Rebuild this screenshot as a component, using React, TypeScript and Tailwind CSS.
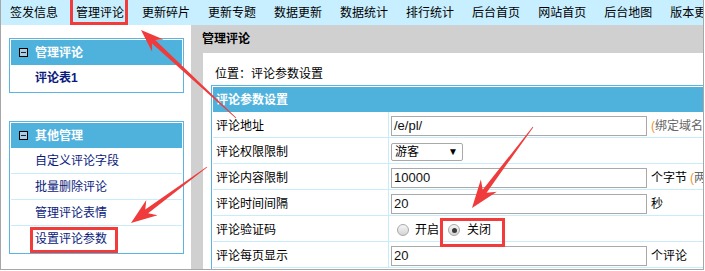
import React from "react";

const navItems = [
  "签发信息",
  "管理评论",
  "更新碎片",
  "更新专题",
  "数据更新",
  "数据统计",
  "排行统计",
  "后台首页",
  "网站首页",
  "后台地图",
  "版本更新",
];

// Tapered annotation arrow: thin tail, wider neck, barbed head.
function arrowPoints(x1: number, y1: number, x2: number, y2: number, headLen: number, headW: number) {
  const dx = x2 - x1;
  const dy = y2 - y1;
  const len = Math.hypot(dx, dy);
  const ux = dx / len;
  const uy = dy / len;
  const nx = -uy;
  const ny = ux;
  const at = (d: number, w: number) => `${x2 - ux * d + nx * w},${y2 - uy * d + ny * w}`;
  const tail = (w: number) => `${x1 + nx * w},${y1 + ny * w}`;
  return [
    tail(0.4),
    at(headLen * 0.75, 2.4),
    at(headLen, headW / 2),
    `${x2},${y2}`,
    at(headLen, -headW / 2),
    at(headLen * 0.75, -2.4),
    tail(-0.4),
  ].join(" ");
}

function PanelIcon() {
  return (
    <span className="w-[9px] h-[9px] border border-black bg-[#a9cfe2] flex items-center justify-center shrink-0">
      <span className="w-[5px] h-[1px] bg-[#222]" />
    </span>
  );
}

function SidePanel({ title, items, bold }: { title: string; items: string[]; bold?: boolean }) {
  return (
    <div className="w-[175px] border border-[#5ab6e1] p-[1px] bg-white">
      <div className="h-[25px] bg-[#4fb2dd] flex items-center pl-[8px] gap-[7px]">
        <PanelIcon />
        <span className="text-white font-bold text-[12px]">{title}</span>
      </div>
      {items.map((t, i) => (
        <div
          key={t}
          className={`h-[26px] flex items-center pl-[24px] text-[12px] text-[#0a1a7c] ${
            bold ? "font-bold" : ""
          } ${i === items.length - 1 ? "" : "border-b border-[#c8ecf9]"}`}
        >
          {t}
        </div>
      ))}
    </div>
  );
}

function Radio({ checked }: { checked?: boolean }) {
  return (
    <span className="w-[12px] h-[12px] rounded-full border border-[#a9a9a9] bg-gradient-to-b from-[#f6f6f6] to-[#d4d4d4] flex items-center justify-center shrink-0">
      {checked && <span className="w-[5px] h-[5px] rounded-full bg-[#3a3a3a]" />}
    </span>
  );
}

function TextInput({ value }: { value: string }) {
  return (
    <div className="w-[256px] h-[20px] border border-[#a9a9a9] flex items-center pl-[2px] text-[13px] text-[#111] shrink-0">
      {value}
    </div>
  );
}

function Row({ label, children }: { label: string; children: React.ReactNode }) {
  return (
    <div className="h-[26px] flex border-b border-[#c8ecf9]">
      <div className="w-[176px] border-r border-[#c8ecf9] flex items-center pt-[3px] pl-[3px] text-[12px] text-black shrink-0">
        {label}
      </div>
      <div className="flex-1 flex items-center pt-[3px] pl-[2px] text-[12px] whitespace-nowrap">{children}</div>
    </div>
  );
}

export default function App() {
  return (
    <div className="relative w-[705px] h-[271px] bg-white overflow-hidden font-['Liberation_Sans','Noto_Sans_CJK_SC',sans-serif]">
      <div className="w-[704px] h-[270px] border-x border-b border-[#a7a7a7] flex flex-col overflow-hidden">
        {/* Top menu */}
        <div className="h-[25px] bg-[#c8efff] flex items-center shrink-0 whitespace-nowrap">
          {navItems.map((t) => (
            <span key={t} className="px-[9px] text-[12px] text-black">
              {t}
            </span>
          ))}
        </div>

        <div className="flex flex-1 min-h-0">
          {/* Sidebar */}
          <div className="w-[190px] bg-white pt-[13px] pl-[8px] flex flex-col gap-[28px] shrink-0">
            <SidePanel title="管理评论" items={["评论表1"]} bold />
            <SidePanel title="其他管理" items={["自定义评论字段", "批量删除评论", "管理评论表情", "设置评论参数"]} />
          </div>

          {/* Main */}
          <div className="flex-1 bg-[#d0d0d0] flex flex-col min-w-0">
            <div className="h-[28px] flex items-center pl-[11px] text-[12px] font-bold text-black shrink-0">
              管理评论
            </div>
            <div className="flex-1 bg-white ml-[12px] pl-[8px] pt-[13px] overflow-hidden">
              <div className="h-[16px] flex items-center pl-[4px] text-[12px] text-black">位置：评论参数设置</div>
              <div className="mt-[3px] w-[620px] border border-[#5ab6e1] p-[1px]">
                <div className="h-[25px] bg-[#4fb2dd] flex items-center pl-[3px] text-white font-bold text-[12px]">
                  评论参数设置
                </div>
                <Row label="评论地址">
                  <TextInput value="/e/pl/" />
                  <span className="ml-[4px] text-[#666]">
                    <span className="text-[#e8962e]">(</span>绑定域名时填写完整地址)
                  </span>
                </Row>
                <Row label="评论权限限制">
                  <div className="w-[72px] h-[18px] border border-[#a9a9a9] rounded-[2px] flex items-center justify-between pl-[3px] pr-[4px] text-[12px] text-black">
                    <span>游客</span>
                    <span className="text-[10px] leading-none">▼</span>
                  </div>
                </Row>
                <Row label="评论内容限制">
                  <TextInput value="10000" />
                  <span className="ml-[4px] text-black">个字节</span>
                  <span className="ml-[3px] text-[#666]">
                    <span className="text-[#e8962e]">(</span>两个字节为一个汉字)
                  </span>
                </Row>
                <Row label="评论时间间隔">
                  <TextInput value="20" />
                  <span className="ml-[4px] text-black">秒</span>
                </Row>
                <Row label="评论验证码">
                  <div className="flex items-center ml-[6px]">
                    <Radio />
                    <span className="ml-[6px] text-black">开启</span>
                    <span className="ml-[9px]">
                      <Radio checked />
                    </span>
                    <span className="ml-[7px] text-black">关闭</span>
                  </div>
                </Row>
                <Row label="评论每页显示">
                  <TextInput value="20" />
                  <span className="ml-[4px] text-black">个评论</span>
                </Row>
              </div>
            </div>
          </div>
        </div>
      </div>

      {/* Annotation boxes */}
      <div className="absolute left-[70px] top-[-3px] w-[58px] h-[28px] border-[3px] border-[#f23c3c]" />
      <div className="absolute left-[30px] top-[227px] w-[88px] h-[26px] border-[3px] border-[#f23c3c]" />
      <div className="absolute left-[440px] top-[218px] w-[65px] h-[29px] border-[3px] border-[#f23c3c]" />

      {/* Annotation arrows */}
      <svg className="absolute inset-0 pointer-events-none" width={705} height={271}>
        <polygon points={arrowPoints(236, 118, 141, 30, 23, 17)} fill="#ef3b3b" />
        <polygon points={arrowPoints(533, 127, 472, 208, 28, 20)} fill="#ef3b3b" />
        <polygon points={arrowPoints(207, 167, 131, 223, 26, 19)} fill="#ef3b3b" />
      </svg>
    </div>
  );
}
